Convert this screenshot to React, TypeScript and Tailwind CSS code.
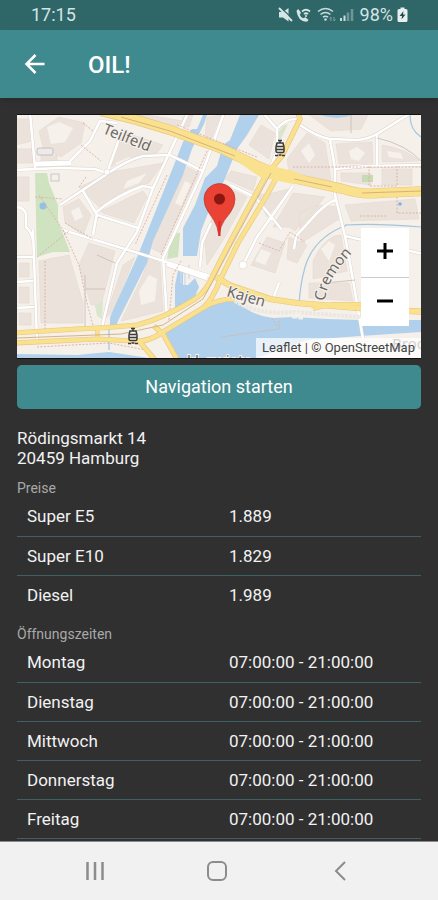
import type { ReactNode } from 'react';

const prices = [
  { title: 'Super E5', value: '1.889' },
  { title: 'Super E10', value: '1.829' },
  { title: 'Diesel', value: '1.989' }
];

const openingTimes = [
  { title: 'Montag', value: '07:00:00 - 21:00:00' },
  { title: 'Dienstag', value: '07:00:00 - 21:00:00' },
  { title: 'Mittwoch', value: '07:00:00 - 21:00:00' },
  { title: 'Donnerstag', value: '07:00:00 - 21:00:00' },
  { title: 'Freitag', value: '07:00:00 - 21:00:00' }
];

// casing + fill colours of the main roads
const MAIN_ROADS = [
  { d: 'M84 -4 L120 5 L153 15 L203 33 L243 52 Q262 60 276 63 L326 74 Q345 80 362 78 L410 76', width: 9 },
  { d: 'M281 -2 L283 4 L265 41 L249 60 L213 127', width: 4 },
  { d: 'M263 56 L250 80 L221 128', width: 4 },
  { d: 'M213 127 L196 160 Q190 176 178 184 Q148 203 120 210 Q90 213 60 214 L-4 218', width: 4 },
  { d: 'M221 128 L203 165 Q196 184 186 193 L146 217 Q130 228 115 226 L80 224 L-4 228', width: 4 },
  { d: 'M199 162 L212 170 L253 184 L280 188 L340 193 L410 197', width: 5 },
  { d: 'M186 193 Q200 184 218 184', width: 4 },
  { d: 'M296 194 L316 189 L344 189', width: 3 },
  { d: 'M137 211 L146 219 L161 246', width: 4 },
  { d: 'M122 226 L139 246', width: 4 },
  { d: 'M80 214 L81 224', width: 3 }
];

const SIDE_ROADS =
  'M-2 55 L43 53 L78 54 L90 58 M13 -2 L18 53 M53 46 L73 26 L83 6 L100 8 ' +
  'M43 90 L90 59 Q110 45 126 41 L153 40 L186 56 M90 58 L102 24 ' +
  'M171 -2 L136 73 L120 117 L100 148 L85 212 M207 -2 L186 56 L146 143 L150 203 ' +
  'M78 98 Q100 80 126 71 L136 73 M66 76 L80 100 L121 113 M80 98 L76 120 ' +
  'M46 115 L75 124 L108 134 L150 147 L196 162 M16 115 L20 226 M-2 167 L16 166 M-2 193 L17 192 M-2 142 L16 142 ' +
  'M-2 92 Q8 92 9 100 L9 112 Q14 116 16 125 M183 152 L185 128 L194 108 ' +
  'M246 -2 L260 14 L260 36 L252 56 M260 14 Q268 4 279 4 M283 10 Q300 22 313 24 L340 25 Q352 24 360 19 L394 -2 ' +
  'M313 25 L318 53 L318 80 L328 121 L336 165 L346 224 M360 20 L360 51 M318 54 L350 51 L406 50 ' +
  'M320 84 Q310 88 300 98 L279 121 L277 134 M276 71 L250 108 L240 122 L227 148 M213 70 L238 82 L265 115 ' +
  'M328 121 L406 139 M262 168 L256 184';

const BUILDINGS =
  'M22 16 L42 2 L68 8 L64 28 L44 42 L26 32 Z M24 40 h16 v7 h-16 Z M94 42 L104 16 L146 30 L140 38 Q116 38 94 52 Z ' +
  'M62 72 L100 56 L146 48 L132 68 Q110 72 82 92 L72 82 Z M46 92 L62 84 L74 100 L66 120 L48 108 Z ' +
  'M84 96 L126 76 L130 82 L117 108 L86 98 Z M22 146 L52 140 L66 188 L66 208 L24 208 Z M72 128 L98 136 L92 160 L84 190 L74 190 L62 150 Z ' +
  'M126 160 L132 142 L143 148 L146 196 L104 206 Z M88 204 L106 150 L118 142 L96 196 Z M112 2 L130 0 L166 6 L160 12 L118 0 Z ' +
  'M170 52 L182 58 L144 138 L132 132 Z M166 2 L176 0 L172 12 L164 12 Z M190 2 L204 0 L194 24 L188 22 Z ' +
  'M232 30 L244 10 L258 18 L252 44 Z M214 56 L240 62 L236 76 L208 64 Z M210 72 L230 82 L208 122 L190 150 L188 128 L198 92 Z M256 78 L272 74 L250 102 L240 80 Z ' +
  'M270 44 L290 18 L308 28 L312 52 L314 66 L272 56 Z M319 29 L355 27 L356 48 L322 49 Z M365 30 Q390 34 402 46 L365 47 Z ' +
  'M324 58 h30 v12 l-30 -4 Z M365 54 h30 v16 h-30 Z M290 -2 h62 l-8 16 l-30 2 Z M328 90 L398 84 L402 104 L334 106 Z ' +
  'M256 112 L276 78 L308 82 L278 116 L272 112 Z M250 122 L268 128 L258 158 L234 150 Z M282 98 L300 90 L322 92 L322 104 L284 128 Z ' +
  'M272 122 L290 130 L280 148 L270 144 Z M296 146 Q308 120 324 120 L330 156 L296 164 Z M292 168 L332 168 L336 186 L292 183 Z ' +
  'M-2 4 h14 l3 22 l-17 4 Z M-2 34 h17 l1 14 h-18 Z M-2 62 h14 v24 h-14 Z M2 148 h10 v14 h-10 Z M2 172 h10 v16 h-10 Z M2 198 h12 v12 h-12 Z';

const TramIcon = ({ x, y }: { x: number; y: number }) => (
  <g transform={`translate(${x} ${y})`} fill="none" stroke="#3b3b3b" strokeWidth="1.5">
    <path d="M-2 -7.5 h4 M0 -7 v2" />
    <path d="M-3 -5 h6 l1 4 v4 q0 1.5 -1.5 1.5 h-5 q-1.5 0 -1.5 -1.5 v-4 Z" fill="#f6f2e6" />
    <path d="M-4 1.5 h8 M-3 -1.5 h6 M-5 7.5 h3 M2 7.5 h3 M-1.500 7 h3" />
  </g>
);

const StreetMap = () => (
  <svg viewBox="0 0 404 243" preserveAspectRatio="xMidYMid slice" className="block w-full" aria-hidden="true">
    <rect width="404" height="243" fill="#f5f0e9" />
    <path d={BUILDINGS} fill="#ebe3db" stroke="#e4d9d0" strokeWidth="0.6" />
    <path
      d="M30 12 l12 -5 l14 6 l-8 14 l-14 2 Z M110 66 l20 -8 l-8 10 l-16 6 Z M98 48 l14 -6 l4 4 l-14 8 Z M54 96 l8 -4 l4 10 l-8 4 Z M122 176 l10 -16 l8 4 l-2 22 l-14 4 Z M168 66 l6 3 l-10 22 l-6 -3 Z M284 36 l8 -8 l6 12 l-6 8 Z M332 36 l8 -4 l8 6 l-6 8 l-8 -2 Z M370 36 l14 2 l2 6 l-14 -2 Z M244 134 l10 4 l-6 12 l-10 -4 Z M304 134 l8 -8 l6 4 l-6 16 Z"
      fill="#f6f1ea"
    />

    {/* Parks */}
    <path d="M18 58 L30 58 L32 68 L41 90 L41 106 L53 137 L36 137 L20 142 Z" fill="#cfe3c0" />
    <path d="M152 132 L160 118 L163 118 L161 142 L150 144 Z" fill="#cfe3c0" />
    <path d="M345 60 h11 v7 h-11 Z" fill="#c8dab1" />
    <path d="M78 190 l8 -4 l-1 18 l-5 -3 Z" fill="#dae6cd" />
    <path d="M258 22 l8 -11 l5 -2 l-8 17 Z" fill="#dbe5cd" />

    {/* Water */}
    <g fill="#b1d0ec">
      <path d="M186 0 H190 L187 9 L183 17 L175 34 L166 60 L136 126 L130 148 L101 206 L98 214 H93 V202 L121 140 L153 60 L166 27 L175 14 L180 14 Z" />
      <path d="M223 0 H242 L230 20 L220 34 L207 66 L193 93 L184 116 L180 141 H166 V113 L178 90 L188 63 L200 51 L206 30 L213 25 Z" />
      <path d="M161 156 H166 V170 H171 L178 163 L182 172 L176 186 L158 194 L158 170 Z" />
      <path d="M148 217 L188 194 L203 185 L220 187 Q236 201 256 203 L276 202 L310 204 L343 205 L404 205 V217 L343 221 L290 225 L240 243 H160 Z" />
      <path d="M0 239 L60 240 L92 237 L132 243 H0 Z" />
      <path d="M303 0 H335 Q321 6 303 0 Z" />
      <circle cx="26" cy="91" r="3.5" fill="#93bfe8" />
      <circle cx="383" cy="89" r="1.8" fill="#79b3ec" />
    </g>
    <path
      d="M330 110 Q297 122 288 152 Q283 170 282 190 M328 110 Q360 108 404 112 M393 0 Q393 15 404 22 M92 213 V235"
      fill="none"
      stroke="#a3c5df"
      strokeWidth="1.2"
    />
    <path d="M164 150 v18 M168 151 v19 M164 159 h4 M172 150 v14" stroke="#c9dbeb" strokeWidth="1.2" />

    {/* Streets */}
    <path d={SIDE_ROADS} fill="none" stroke="#d9d0ca" strokeWidth="3.4" />
    <path d="M18 49 L54 48 M150 149 L190 163" fill="none" stroke="#d9d0ca" strokeWidth="6" />
    <path d={SIDE_ROADS} fill="none" stroke="#ffffff" strokeWidth="2.6" />
    <path d="M18 49 L54 48 M150 149 L190 163" fill="none" stroke="#ffffff" strokeWidth="5" />
    <circle cx="90" cy="57" r="3" fill="#fff" stroke="#ddd4cd" strokeWidth="0.6" />
    <circle cx="226" cy="150" r="4" fill="#fff" stroke="#ddd4cd" strokeWidth="0.6" />
    <rect x="20" y="33" width="16" height="7" rx="2" fill="#eeeaea" stroke="#b9b6bb" strokeWidth="0.8" />
    <rect x="34" y="59" width="8" height="7" fill="#f3efea" stroke="#c4bfba" strokeWidth="0.8" />

    {/* Footpaths */}
    <path
      d="M46 115 L62 150 L70 188 L77 214 M18 82 L46 84 M20 142 L52 116 M22 80 L48 118 M64 30 L84 46 M66 8 L76 16 M28 146 V214 M69 62 L62 72 M48 108 L76 124 M20 232 L92 228 L134 236 M160 10 L240 42 M276 52 H404 M352 51 V71 H380 V51 M380 75 V98 H404 M343 101 H370 M152 205 L156 160 L164 146 M150 60 L118 130 M190 36 L144 140 M242 128 L262 136 L273 117 L289 128 M255 203 L260 212"
      fill="none"
      stroke="#dcaea5"
      strokeWidth="0.9"
      strokeDasharray="2 1.5"
    />
    <path d="M68 160 V214 M68 174 H88 M80 140 L98 148 M360 23 Q388 29 404 46 M334 0 V18 M262 205 V214 L204 222 M309 168 L338 165" fill="none" stroke="#c9bfb8" strokeWidth="0.9" />

    {/* Main roads */}
    {MAIN_ROADS.map((road) => (
      <path key={road.d} d={road.d} fill="none" stroke="#e8c583" strokeWidth={road.width + 1.2} />
    ))}
    <path d="M218 36 L243 48 L276 56 L300 66 L276 69 L243 62 L214 42 Z" fill="#fae18d" />
    {MAIN_ROADS.map((road) => (
      <path key={road.d} d={road.d} fill="none" stroke="#fae18d" strokeWidth={road.width} />
    ))}
    <path
      d="M104 2 L153 16 L218 41 M277 64 L315 72 M345 78 L404 76 M254 58 L218 124 L198 162 L186 184 L146 210 L104 219 L0 223"
      fill="none"
      stroke="#d1ad78"
      strokeWidth="0.9"
    />

    {/* Quay along the river */}
    <path d="M218 186 Q240 200 276 197 L343 202" fill="none" stroke="#ece7e2" strokeWidth="4" strokeDasharray="3 1" />
    <path d="M275 202 h4 v-3 h4 v4 h3" fill="none" stroke="#f3f0ec" strokeWidth="3" />

    <TramIcon x={116} y={221} />
    <TramIcon x={263} y={33} />

    <g
      fill="#6a6765"
      stroke="#f7f2ec"
      strokeWidth="2"
      paintOrder="stroke"
      className="font-['Noto_Sans',sans-serif] text-[15px]"
    >
      <path id="cremon-line" d="M308 186 Q309 165 337 136" fill="none" stroke="none" />
      <text transform="translate(85 18) rotate(22)">Teilfeld</text>
      <text transform="translate(209 181) rotate(16)">Kajen</text>
      <text>
        <textPath href="#cremon-line">Cremon</textPath>
      </text>
      <text x="375" y="234">Brook</text>
      <text x="170" y="251">kl. zwiete</text>
    </g>

    {/* Station marker */}
    <path d="M202 121 L200 112 Q198 106 192 98 Q187 91 187 84 A15.5 15.5 0 0 1 218 84 Q218 91 213 98 Q206 106 204 112 Z" fill="#ea4335" stroke="#b5392c" strokeWidth="0.7" />
    <path d="M202.5 106 V121" stroke="#e32b22" strokeWidth="2" />
    <circle cx="202.5" cy="84" r="5.5" fill="#8b1712" />
  </svg>
);

const StatusIcons = () => (
  <svg width="78" height="16" viewBox="0 0 78 16" fill="none" aria-hidden="true">
    {/* Muted */}
    <path d="M1 5 h4 L10.500 1 V14.500 L5 10.500 H1 Z" fill="#d5e4e5" />
    <path d="M2.500 0.500 L15 12" stroke="#2f6668" strokeWidth="1.2" />
    <path d="M1 1 L14 14" stroke="#d5e4e5" strokeWidth="2" />
    {/* Wifi call */}
    <path d="M18.500 4 q0.500 -1.800 2 -1.800 l2.500 3.500 l-1.200 2 q1 3 3.500 3.500 l2 -1 l3.200 2.500 q-0.500 2 -2.500 2 q-8 -0.500 -9.500 -10.700 Z" fill="#d5e4e5" />
    <path d="M24 4.500 q4 -3.500 8 0 M26 7 q2 -1.500 4 0" stroke="#d5e4e5" strokeWidth="1.8" />
    <circle cx="28" cy="9" r="1" fill="#d5e4e5" />
    {/* Wifi */}
    <path d="M40 4.500 q7.500 -6 15 0 M42.500 7.500 q5 -4 10 0 M45 10.200 q2.500 -2 5 0" stroke="#c9dddd" strokeWidth="1.600" />
    <circle cx="47.5" cy="12.5" r="1.3" fill="#c9dddd" />
    <path d="M53 14 V10 l-1.500 1.500 M56 10 v4 l1.500 -1.500" stroke="#7ea3a4" strokeWidth="1" />
    {/* Signal */}
    <path d="M63 14 v-3 M66.500 14 V8.500" stroke="#c9dddd" strokeWidth="2" />
    <path d="M70 14 V5.500 M74 14 V2" stroke="#6f9798" strokeWidth="2.500" />
  </svg>
);

const BatteryIcon = () => (
  <svg width="11" height="16" viewBox="0 0 11 16" aria-hidden="true">
    <path d="M3.5 0.5 h4 v1.5 H9 q1.5 0 1.5 1.5 V13.5 q0 1.5 -1.5 1.5 H2 q-1.5 0 -1.5 -1.5 V3.5 Q0.5 2 2 2 H3.5 Z" fill="#e6f0f0" />
    <path d="M6.500 4 L2.5 9 H5 L4.5 12.5 L8.5 7.5 H6 Z" fill="#26484a" />
  </svg>
);

const DetailTable = ({ title, rows, children }: { title: string; rows: { title: string; value: string }[]; children?: ReactNode }) => (
  <table className="w-full table-fixed border-collapse text-left text-[17px] leading-5">
    <caption className="h-[18px] text-left text-[14px] leading-[18px] text-[#a8a8a8]">{title}</caption>
    <tbody>
      {rows.map((row) => (
        <tr key={row.title} className="h-[39px] border-b border-[#3f6063]">
          <th scope="row" className="w-1/2 pl-2.5 font-normal">{row.title}</th>
          <td className="w-1/2 pl-2.5">{row.value}</td>
        </tr>
      ))}
      {children}
    </tbody>
  </table>
);

const App = () => {
  return (
    <div className="flex h-screen flex-col bg-[#303030] font-['Roboto',sans-serif] text-[#f2f2f2]">
      {/* Status bar */}
      <div className="flex h-[30px] shrink-0 items-center justify-between bg-[#2f6668] pl-[31px] pr-[30px] text-[18px] leading-5 text-[#d5e4e5]">
        <span>17:15</span>
        <div className="flex items-center gap-1">
          <StatusIcons />
          <span className="text-[18px]">98%</span>
          <BatteryIcon />
        </div>
      </div>

      {/* App bar */}
      <header className="flex h-[68px] shrink-0 items-center gap-[42px] bg-[#3f8a8f] pl-6 text-white shadow-md">
        <button type="button" aria-label="Zurück">
          <svg width="22" height="22" viewBox="0 0 22 22" fill="none" stroke="currentColor" strokeWidth="2.5" aria-hidden="true">
            <path d="M20.5 11 H3 M11.500 2 L2.5 11 L11.500 20" />
          </svg>
        </button>
        <h1 className="pt-0.5 text-[24px] font-medium leading-7">OIL!</h1>
      </header>

      <main className="min-h-0 flex-1 overflow-hidden px-[17px] pt-4">
        <div className="relative border-y border-[#111111]">
          <StreetMap />
          <div className="absolute bottom-8 right-3 flex w-12 flex-col overflow-hidden bg-white text-black">
            <button type="button" aria-label="Zoom in" className="flex h-[50px] items-center justify-center border-b border-[#cccccc] pb-1">
              <svg width="16" height="16" viewBox="0 0 16 16" stroke="currentColor" strokeWidth="3" aria-hidden="true">
                <path d="M0 8 H16 M8 0 V16" />
              </svg>
            </button>
            <button type="button" aria-label="Zoom out" className="flex h-12 items-center justify-center pb-0.5">
              <svg width="16" height="16" viewBox="0 0 16 16" stroke="currentColor" strokeWidth="3" aria-hidden="true">
                <path d="M0 8 H16" />
              </svg>
            </button>
          </div>
          <div className="absolute bottom-0 right-0 bg-white/70 px-1.5 text-[13px] leading-5 text-[#444444]">
            <a href="#leaflet">Leaflet</a> | © <a href="#openstreetmap">OpenStreetMap</a>
          </div>
        </div>

        <button type="button" className="mt-1.5 h-11 w-full rounded-[5px] bg-[#3f8a8f] text-[18px] leading-6 text-white">
          Navigation starten
        </button>

        <address className="mt-[19px] text-[17px] not-italic leading-5">
          Rödingsmarkt 14
          <br />
          20459 Hamburg
        </address>

        <div className="mt-[11px] flex flex-col gap-[11px]">
          <DetailTable title="Preise" rows={prices.slice(0, -1)}>
            {prices.slice(-1).map((row) => (
              <tr key={row.title} className="h-[39px]">
                <th scope="row" className="pl-2.5 font-normal">{row.title}</th>
                <td className="pl-2.5">{row.value}</td>
              </tr>
            ))}
          </DetailTable>
          <DetailTable title="Öffnungszeiten" rows={openingTimes} />
        </div>
      </main>

      {/* System navigation */}
      <nav className="grid h-[59px] shrink-0 grid-cols-3 items-center border-t border-[#8a8a8a] bg-[#f1f1f1] pl-[34px] pr-[37px] text-[#8c8c8c]">
        <button type="button" aria-label="Letzte Apps" className="flex justify-center">
          <svg width="20" height="20" viewBox="0 0 20 20" stroke="currentColor" strokeWidth="2.5" aria-hidden="true">
            <path d="M2.5 1 V19 M10 1 V19 M17.5 1 V19" />
          </svg>
        </button>
        <button type="button" aria-label="Startbildschirm" className="flex justify-center">
          <svg width="20" height="20" viewBox="0 0 20 20" fill="none" stroke="currentColor" strokeWidth="2" aria-hidden="true">
            <rect x="1" y="1" width="18" height="18" rx="5" />
          </svg>
        </button>
        <button type="button" aria-label="Zurück" className="flex justify-center">
          <svg width="12" height="20" viewBox="0 0 12 20" fill="none" stroke="currentColor" strokeWidth="2" aria-hidden="true">
            <path d="M11 1 L2 10 L11 19" />
          </svg>
        </button>
      </nav>
    </div>
  );
};

export default App;
